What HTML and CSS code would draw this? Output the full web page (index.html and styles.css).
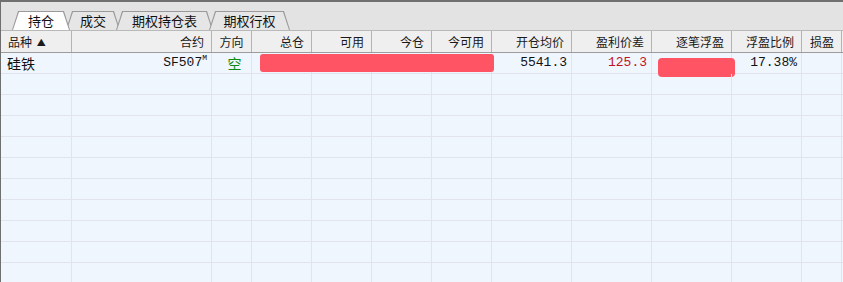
FILE: index.html
```html
<!DOCTYPE html>
<html lang="zh-CN">
<head>
    <meta charset="UTF-8">
    <title>持仓</title>
    <link rel="stylesheet" href="styles.css">
</head>
<body>
    <div class="panel">
        <div class="tabs">
            <div class="tab active w1">持仓</div>
            <div class="tab w2">成交</div>
            <div class="tab w3">期权持仓表</div>
            <div class="tab w4">期权行权</div>
        </div>

        <div class="grid">
            <div class="row head">
                <div class="cell left">品种 <span class="sort">▲</span></div>
                <div class="cell">合约</div>
                <div class="cell center">方向</div>
                <div class="cell">总仓</div>
                <div class="cell">可用</div>
                <div class="cell">今仓</div>
                <div class="cell">今可用</div>
                <div class="cell">开仓均价</div>
                <div class="cell">盈利价差</div>
                <div class="cell">逐笔浮盈</div>
                <div class="cell">浮盈比例</div>
                <div class="cell">损盈</div>
            </div>

            <div class="row data first">
                <div class="cell left cn">硅铁</div>
                <div class="cell num">SF507<sup>M</sup></div>
                <div class="cell center cn short">空</div>
                <div class="cell"></div>
                <div class="cell"></div>
                <div class="cell"></div>
                <div class="cell"></div>
                <div class="cell num">5541.3</div>
                <div class="cell num up">125.3</div>
                <div class="cell"></div>
                <div class="cell num">17.38%</div>
                <div class="cell"></div>
                <span class="mask mask-qty"></span>
                <span class="mask mask-pnl"></span>
            </div>
        </div>
    </div>

    <script>
        // 补齐空行
        var grid = document.querySelector('.grid');
        for (var i = 0; i < 10; i++) {
            var row = document.createElement('div');
            row.className = 'row data';
            for (var j = 0; j < 12; j++) {
                var c = document.createElement('div');
                c.className = 'cell';
                row.appendChild(c);
            }
            grid.appendChild(row);
        }
    </script>
</body>
</html>
```

FILE: styles.css
```css
body {
    margin: 0;
    font-family: "Noto Sans CJK SC", "DejaVu Sans", sans-serif;
    color: #111;
    background: #f0f6fd;
    overflow: hidden;
}

.panel {
    width: 843px;
    height: 282px;
    border-left: 1px solid #6f6f6f;
    box-sizing: border-box;
    overflow: hidden;
}

/* 页签 */
.tabs {
    display: flex;
    align-items: flex-end;
    height: 28px;
    padding: 0 0 0 11px;
    background: #e3e3e3;
    border-top: 2px solid #707070;
}

.tab {
    position: relative;
    z-index: 0;
    height: 19px;
    line-height: 19px;
    margin-right: -4px;
    text-align: center;
    font-size: 13px;
    color: #111;
}

.tab::before,
.tab::after {
    content: "";
    position: absolute;
    z-index: -1;
    clip-path: polygon(0 100%, 6px 0, calc(100% - 6px) 0, 100% 100%);
}

.tab::before {
    inset: 0;
    background: #9a9a9a;
}

.tab::after {
    top: 1px;
    left: 1px;
    right: 1px;
    bottom: 0;
    background: #e6e6e6;
}

.tab.active {
    z-index: 2;
}

.tab.active::after {
    background: #ffffff;
}

.w1 { width: 58px; }
.w2 { width: 54px; }
.w3 { width: 97px; }
.w4 { width: 81px; }

/* 表格 */
.grid {
    display: flex;
    flex-direction: column;
}

.row {
    position: relative;
    display: grid;
    grid-template-columns: 71px 140px 40px 60px 60px 60px 60px 80px 80px 80px 70px 40px;
}

.cell {
    box-sizing: border-box;
    border-right: 1px solid #e1e5eb;
    padding: 0 6px 0 4px;
    text-align: right;
    white-space: nowrap;
    overflow: hidden;
}

.head {
    height: 23px;
    background: #efefef;
    border-top: 1px solid #b9b9b9;
    border-bottom: 1px solid #9c9c9c;
    box-sizing: border-box;
}

.head .cell {
    font-size: 12px;
    line-height: 21px;
    color: #1a1a1a;
    border-right: 1px solid #b4b4b4;
    padding-right: 7px;
}

.head .cell.left {
    padding-left: 7px;
}

.sort {
    font-size: 9px;
    margin-left: 2px;
    vertical-align: 1px;
}

.data {
    height: 21px;
    border-bottom: 1px solid #e1e5eb;
    box-sizing: border-box;
}

.data .cell {
    line-height: 20px;
    font-size: 13px;
}

.cell.left { text-align: left; }
.cell.center { text-align: center; padding: 0; }

.cell.cn {
    font-size: 14px;
    padding-left: 6px;
}

.cell.num {
    font-family: "Liberation Mono", monospace;
    padding-right: 4px;
}

.cell.num sup {
    font-size: 8px;
    vertical-align: 6px;
    line-height: 0;
}

.short { color: #0f8a14; }
.up { color: #c0141c; }

.mask {
    position: absolute;
    background: #ff5464;
    border-radius: 3px;
}

.mask-qty {
    left: 259px;
    top: 1px;
    width: 234px;
    height: 18px;
}

.mask-pnl {
    left: 657px;
    top: 5px;
    width: 77px;
    height: 19px;
    border-radius: 4px;
}
```
